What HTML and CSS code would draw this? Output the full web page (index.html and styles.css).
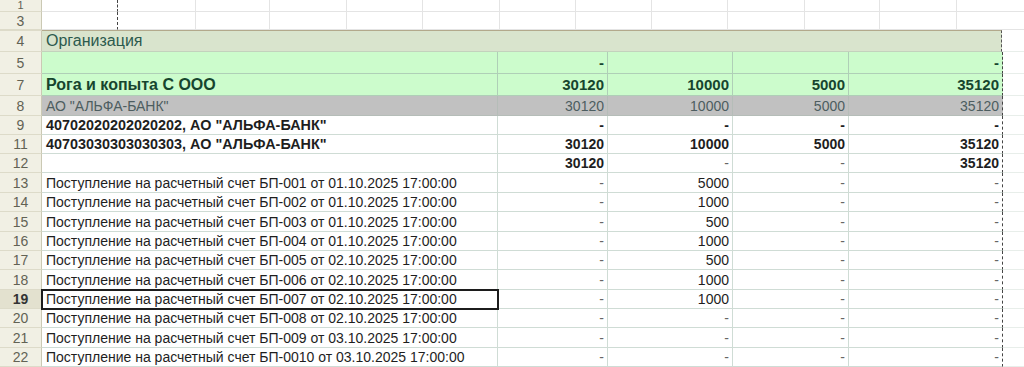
FILE: index.html
```html
<!DOCTYPE html>
<html lang="ru">
<head>
<meta charset="utf-8">
<link rel="stylesheet" href="styles.css">
</head>
<body>
<div class="sheet">
  <div class="row top h12">
    <div class="rh">1</div><div class="c dash"></div><div class="c"></div><div class="c"></div><div class="c"></div><div class="c"></div><div class="c"></div><div class="c"></div><div class="c"></div><div class="c"></div><div class="c"></div><div class="c"></div><div class="c"></div><div class="c last"></div>
  </div>
  <div class="row top h18">
    <div class="rh">3</div><div class="c dash"></div><div class="c"></div><div class="c"></div><div class="c"></div><div class="c"></div><div class="c"></div><div class="c"></div><div class="c"></div><div class="c"></div><div class="c"></div><div class="c"></div><div class="c"></div><div class="c last"></div>
  </div>
  <div class="row org h22">
    <div class="rh">4</div><div class="c span">Организация</div><div class="c out"></div>
  </div>
  <div class="row tbl grn h22">
    <div class="rh">5</div><div class="c"></div><div class="c num b">-</div><div class="c"></div><div class="c"></div><div class="c num b edge">-</div><div class="c out"></div>
  </div>
  <div class="row tbl grn h22">
    <div class="rh">7</div><div class="c big">Рога и копыта С ООО</div><div class="c num b">30120</div><div class="c num b">10000</div><div class="c num b">5000</div><div class="c num b edge">35120</div><div class="c out"></div>
  </div>
  <div class="row tbl gray h20">
    <div class="rh">8</div><div class="c">АО "АЛЬФА-БАНК"</div><div class="c num">30120</div><div class="c num">10000</div><div class="c num">5000</div><div class="c num edge">35120</div><div class="c out"></div>
  </div>
  <div class="row tbl h19">
    <div class="rh">9</div><div class="c b acct">40702020202020202, АО "АЛЬФА-БАНК"</div><div class="c num b">-</div><div class="c num b">-</div><div class="c num b">-</div><div class="c num b edge">-</div><div class="c out"></div>
  </div>
  <div class="row tbl h19">
    <div class="rh">11</div><div class="c b acct">40703030303030303, АО "АЛЬФА-БАНК"</div><div class="c num b">30120</div><div class="c num b">10000</div><div class="c num b">5000</div><div class="c num b edge">35120</div><div class="c out"></div>
  </div>
  <div class="row tbl h19">
    <div class="rh">12</div><div class="c"></div><div class="c num b">30120</div><div class="c num dim">-</div><div class="c num dim">-</div><div class="c num b edge">35120</div><div class="c out"></div>
  </div>
  <div class="row tbl h20">
    <div class="rh">13</div><div class="c">Поступление на расчетный счет БП-001 от 01.10.2025 17:00:00</div><div class="c num dim">-</div><div class="c num">5000</div><div class="c num dim">-</div><div class="c num dim edge">-</div><div class="c out"></div>
  </div>
  <div class="row tbl h19">
    <div class="rh">14</div><div class="c">Поступление на расчетный счет БП-002 от 01.10.2025 17:00:00</div><div class="c num dim">-</div><div class="c num">1000</div><div class="c num dim">-</div><div class="c num dim edge">-</div><div class="c out"></div>
  </div>
  <div class="row tbl h20">
    <div class="rh">15</div><div class="c">Поступление на расчетный счет БП-003 от 01.10.2025 17:00:00</div><div class="c num dim">-</div><div class="c num">500</div><div class="c num dim">-</div><div class="c num dim edge">-</div><div class="c out"></div>
  </div>
  <div class="row tbl h19">
    <div class="rh">16</div><div class="c">Поступление на расчетный счет БП-004 от 01.10.2025 17:00:00</div><div class="c num dim">-</div><div class="c num">1000</div><div class="c num dim">-</div><div class="c num dim edge">-</div><div class="c out"></div>
  </div>
  <div class="row tbl h19">
    <div class="rh">17</div><div class="c">Поступление на расчетный счет БП-005 от 02.10.2025 17:00:00</div><div class="c num dim">-</div><div class="c num">500</div><div class="c num dim">-</div><div class="c num dim edge">-</div><div class="c out"></div>
  </div>
  <div class="row tbl h20">
    <div class="rh">18</div><div class="c">Поступление на расчетный счет БП-006 от 02.10.2025 17:00:00</div><div class="c num dim">-</div><div class="c num">1000</div><div class="c num dim">-</div><div class="c num dim edge">-</div><div class="c out"></div>
  </div>
  <div class="row tbl h19 active">
    <div class="rh">19</div><div class="c sel">Поступление на расчетный счет БП-007 от 02.10.2025 17:00:00</div><div class="c num dim">-</div><div class="c num">1000</div><div class="c num dim">-</div><div class="c num dim edge">-</div><div class="c out"></div>
  </div>
  <div class="row tbl h19">
    <div class="rh">20</div><div class="c">Поступление на расчетный счет БП-008 от 02.10.2025 17:00:00</div><div class="c num dim">-</div><div class="c num dim">-</div><div class="c num dim">-</div><div class="c num dim edge">-</div><div class="c out"></div>
  </div>
  <div class="row tbl h20">
    <div class="rh">21</div><div class="c">Поступление на расчетный счет БП-009 от 03.10.2025 17:00:00</div><div class="c num dim">-</div><div class="c num dim">-</div><div class="c num dim">-</div><div class="c num dim edge">-</div><div class="c out"></div>
  </div>
  <div class="row tbl h19">
    <div class="rh">22</div><div class="c">Поступление на расчетный счет БП-0010 от 03.10.2025 17:00:00</div><div class="c num dim">-</div><div class="c num dim">-</div><div class="c num dim">-</div><div class="c num dim edge">-</div><div class="c out"></div>
  </div>
</div>
</body>
</html>
```

FILE: styles.css
```css
html, body {
  margin: 0;
  padding: 0;
  background: #ffffff;
}
body {
  font-family: "Liberation Sans", Arial, sans-serif;
  font-size: 14px;
  color: #1e1e1e;
  width: 1024px;
  height: 367px;
  overflow: hidden;
}
.sheet {
  display: flex;
  flex-direction: column;
}
.row {
  display: grid;
  box-sizing: border-box;
}
.h12 { height: 12px; }
.h18 { height: 18px; }
.h19 { height: 19px; }
.h20 { height: 20px; }
.h22 { height: 22px; }

.c, .rh {
  box-sizing: border-box;
  border-right: 1px solid #cfdcd5;
  border-bottom: 1px solid #cfdcd5;
  display: flex;
  align-items: center;
  padding: 0 4px;
  white-space: nowrap;
  overflow: hidden;
  min-width: 0;
  line-height: 16px;
}
.rh {
  justify-content: center;
  background: #f1f0e4;
  color: #626254;
  border-right: 1px solid #cbc9b4;
  border-bottom: 1px solid #dddbc9;
  font-size: 14px;
  padding: 0;
}
.h12 .rh {
  align-items: flex-start;
  line-height: 11px;
  font-size: 11px;
  overflow: visible;
}

/* top rows: generic grid */
.top {
  grid-template-columns: 42px 76px 78px 74px 77px 76px 77px 76px 76px 76px 77px 75px 77px 1fr;
}
.top .c { border-color: #e4e4e4; }
.top .c.dash {
  border-right: 1px dashed #444;
}
.top .c.last { border-right: none; }

/* table rows */
.tbl {
  grid-template-columns: 42px 456px 110px 125px 116px 154px 1fr;
}
.org {
  grid-template-columns: 42px 960px 1fr;
}
.org .span {
  background: #d9e4cd;
  color: #2c5a4d;
  font-size: 16px;
  border-top: 1px solid #b3a98c;
  border-right: 1px dashed #555;
  border-bottom: 1px solid #c3d2bd;
  padding-left: 4px;
}
.org .rh { border-top: 1px solid #dddbc9; }

.grn .c:not(.out) {
  background: #ccfccc;
  border-color: #afcfb7;
  color: #16452e;
}
.grn .num { font-size: 15px; }
.gray .c:not(.out) {
  background: #c1c1c1;
  border-color: #b5bdb8;
  color: #4d5d60;
}
.big {
  font-size: 16px;
  font-weight: bold;
}
.b { font-weight: bold; }
.acct { font-size: 14.4px; }
.num {
  justify-content: flex-end;
  padding-right: 3px;
}
.dim { color: #666; }
.edge {
  border-right: 1px dashed #444 !important;
}
.out {
  border-right: none;
  border-bottom: 1px solid #e8eeea;
}
.active .rh {
  background: #e3e1cf;
  color: #333;
  font-weight: bold;
}
.sel {
  outline: 2px solid #1c1c1c;
  outline-offset: -1px;
  position: relative;
  z-index: 1;
}
```
